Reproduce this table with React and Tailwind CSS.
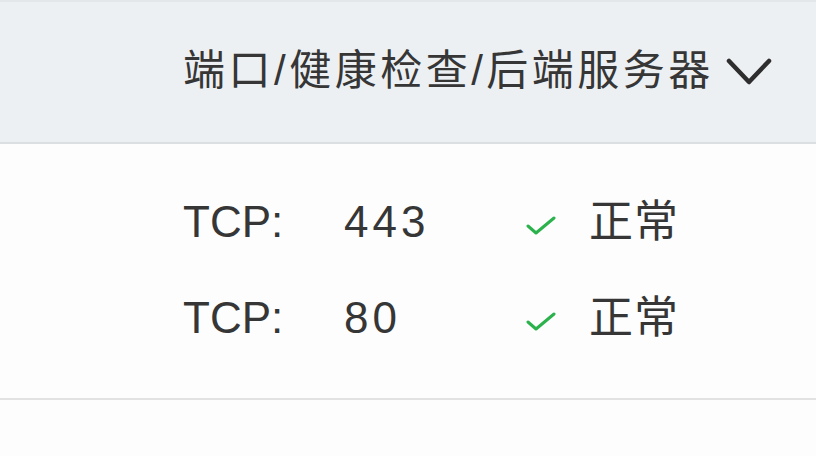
import React from 'react'

const rows = [
  { proto: 'TCP:', port: '443', status: '正常' },
  { proto: 'TCP:', port: '80', status: '正常' },
]

function Chevron() {
  return (
    <svg width="46" height="30" viewBox="0 0 46 30" fill="none" className="shrink-0">
      <path d="M3 4 L23 25 L43 4" stroke="#2e2e2e" strokeWidth="4.5" strokeLinecap="round" strokeLinejoin="round" />
    </svg>
  )
}

function Check() {
  return (
    <svg width="30" height="20" viewBox="0 0 30 20" fill="none" className="shrink-0">
      <path d="M2 10 L10 17 L28 2" stroke="#2bb24c" strokeWidth="3" strokeLinecap="round" strokeLinejoin="round" />
    </svg>
  )
}

export default function App() {
  return (
    <div
      className="w-[816px] h-[456px] bg-[#fdfdfd] text-[#363636] overflow-hidden"
      style={{ fontFamily: '"Liberation Sans", "Noto Sans CJK SC", sans-serif' }}
    >
      <div className="h-[144px] bg-[#edf0f3] border-t-2 border-t-[#e4e7ea] border-b-2 border-b-[#dcdfe2] flex items-center pl-[183px]">
        <span className="text-[42px] leading-none tracking-[3.5px] -mt-[3px]">端口/健康检查/后端服务器</span>
        <span className="ml-[12px]">
          <Chevron />
        </span>
      </div>

      <div className="pt-[30px] pb-[32px] border-b-2 border-b-[#e2e2e2]">
        {rows.map((r, i) => (
          <div key={i} className="h-[96px] flex items-center pl-[183px] text-[44px] leading-none">
            <span className="w-[161px]">{r.proto}</span>
            <span className="w-[182px] tracking-[4px]">{r.port}</span>
            <span className="w-[63px] flex items-center pt-[8px]">
              <Check />
            </span>
            <span className="tracking-[1px]">{r.status}</span>
          </div>
        ))}
      </div>
    </div>
  )
}
